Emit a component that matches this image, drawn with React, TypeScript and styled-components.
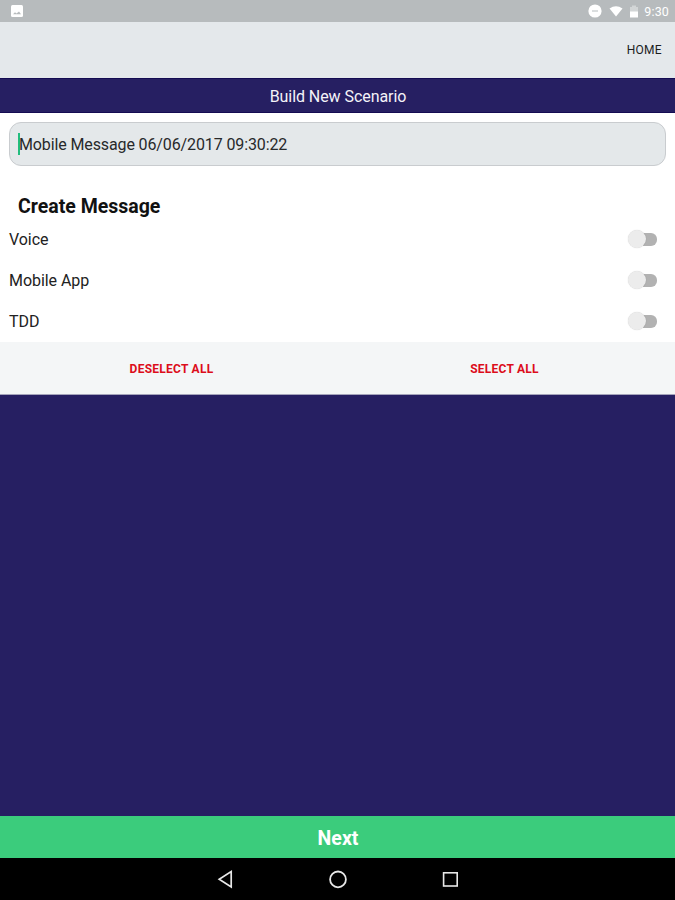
import React from "react";
import styled, { createGlobalStyle } from "styled-components";

const GlobalStyle = createGlobalStyle`
  * { box-sizing: border-box; }
  body { margin: 0; font-family: Roboto, "Liberation Sans", sans-serif; }
  button { font-family: inherit; border: 0; padding: 0; background: none; }
`;

const Screen = styled.div`
  width: 675px;
  height: 900px;
  display: flex;
  flex-direction: column;
  background: #261f62;
  overflow: hidden;
`;

const StatusBar = styled.div`
  height: 22px;
  flex: none;
  display: flex;
  align-items: center;
  justify-content: space-between;
  padding: 0 6px 0 11px;
  background: #b7bbbd;
  color: #fff;
  svg { display: block; }
`;

const StatusIcons = styled.div`
  display: flex;
  align-items: center;
`;

const Gap = styled.span<{ $w: number }>`
  width: ${(p) => p.$w}px;
`;

const Clock = styled.span`
  margin-left: 5px;
  padding-top: 1px;
  font-size: 12.5px;
  line-height: 22px;
  font-weight: 400;
  letter-spacing: 0.15px;
  color: #fff;
`;

const AppBar = styled.header`
  height: 56px;
  flex: none;
  display: flex;
  align-items: center;
  justify-content: flex-end;
  padding-right: 13px;
  background: #e4e8eb;
`;

const HomeButton = styled.button`
  font-size: 12px;
  line-height: 16px;
  letter-spacing: 0.3px;
  color: #1c1d1e;
`;

const TitleBar = styled.h1`
  height: 35px;
  flex: none;
  margin: 0;
  padding: 1px 0 0 1px;
  background: #261f62;
  box-shadow: inset 0 1px #140b52, inset 0 -1px #140b52;
  color: #f4f3f8;
  font-size: 16px;
  font-weight: 400;
  line-height: 36px;
  letter-spacing: -0.06px;
  text-align: center;
`;

const Form = styled.main`
  height: 229px;
  flex: none;
  padding: 9px 9px 0;
  background: #fff;
`;

const NameField = styled.div`
  height: 44px;
  display: flex;
  align-items: center;
  padding-left: 8px;
  border: 1px solid #c9cccf;
  border-radius: 12px;
  background: #e4e8ea;
  color: #27292a;
  font-size: 16px;
  line-height: 20px;
`;

const Caret = styled.span`
  width: 2px;
  height: 22px;
  margin-right: -1px;
  background: #22bd7e;
`;

const FieldText = styled.span`
  padding-top: 2px;
  letter-spacing: -0.12px;
`;

const SectionTitle = styled.h2`
  height: 53px;
  margin: 0;
  padding: 30px 0 0 9px;
  font-size: 19.5px;
  line-height: 22px;
  font-weight: 700;
  color: #111;
`;

const Row = styled.div`
  height: 41px;
  display: flex;
  align-items: center;
  justify-content: space-between;
  padding-right: 8px;
  font-size: 16px;
  line-height: 20px;
  letter-spacing: -0.06px;
  color: #222;
`;

const Switch = styled.button`
  width: 30px;
  height: 18px;
  margin-bottom: 1px;
  display: flex;
  align-items: center;
`;

const Thumb = styled.span`
  flex: none;
  width: 18px;
  height: 18px;
  border-radius: 50%;
  background: #ececec;
  box-shadow: 0 0 1px rgba(0, 0, 0, 0.22);
  z-index: 1;
`;

const Track = styled.span`
  flex: none;
  width: 20px;
  height: 13px;
  margin-left: -9px;
  border-radius: 6px;
  background: #b2b2b2;
`;

const Actions = styled.div`
  height: 53px;
  flex: none;
  display: grid;
  grid-template-columns: 343px 323px;
  background: #f4f6f7;
  border-bottom: 1px solid #a5a4bb;
`;

const ActionButton = styled.button`
  padding-top: 2px;
  color: #dc0d1b;
  font-size: 12px;
  font-weight: 700;
  line-height: 16px;
  letter-spacing: 0.25px;
`;

const Body = styled.div`
  flex: 1;
`;

const NextButton = styled.button`
  height: 42px;
  flex: none;
  padding-top: 3px;
  padding-left: 1px;
  background: #3bcc7c;
  color: #fff;
  font-size: 19.5px;
  font-weight: 700;
  line-height: 39px;
`;

const NavBar = styled.nav`
  height: 42px;
  flex: none;
  display: flex;
  justify-content: center;
  gap: 92px;
  align-items: center;
  background: #000;
  svg { display: block; }
`;

const PictureIcon = () => (
  <svg width="12" height="12" viewBox="0 0 12 12">
    <rect width="12" height="12" rx="1.5" fill="#fff" />
    <path d="M2 9.2 4 7.2l1.5 1.2L8 6.5l2 2.7Z" fill="#b7bbbd" />
  </svg>
);

const DndIcon = () => (
  <svg width="14" height="14" viewBox="0 0 14 14">
    <circle cx="7" cy="7" r="6.6" fill="#fff" />
    <path d="M4 7h6" stroke="#d3d6d8" strokeWidth="1.6" />
  </svg>
);

const WifiIcon = () => (
  <svg width="14" height="12" viewBox="0 0 14 12">
    <path d="M.5 3.5Q7-.9 13.5 3.5L7 11.5Z" fill="#fff" />
  </svg>
);

const BatteryIcon = () => (
  <svg width="10" height="14" viewBox="0 0 10 14">
    <path d="M1 3h2V1.5h4V3h2v5H1Z" fill="#d2d5d6" />
    <path d="M1 7.5h8v6H1Z" fill="#fff" />
  </svg>
);

const options = ["Voice", "Mobile App", "TDD"];

export default function App() {
  return (
    <>
      <GlobalStyle />
      <Screen>
        <StatusBar>
          <PictureIcon />
          <StatusIcons>
            <DndIcon />
            <Gap $w={7} />
            <WifiIcon />
            <Gap $w={6} />
            <BatteryIcon />
            <Clock>9:30</Clock>
          </StatusIcons>
        </StatusBar>
        <AppBar>
          <HomeButton>HOME</HomeButton>
        </AppBar>
        <TitleBar>Build New Scenario</TitleBar>
        <Form>
          <NameField>
            <Caret />
            <FieldText>Mobile Message 06/06/2017 09:30:22</FieldText>
          </NameField>
          <SectionTitle>Create Message</SectionTitle>
          {options.map((name) => (
            <Row key={name}>
              {name}
              <Switch role="switch" aria-checked={false} aria-label={name}>
                <Thumb />
                <Track />
              </Switch>
            </Row>
          ))}
        </Form>
        <Actions>
          <ActionButton>DESELECT ALL</ActionButton>
          <ActionButton>SELECT ALL</ActionButton>
        </Actions>
        <Body />
        <NextButton>Next</NextButton>
        <NavBar>
          <svg width="20" height="20" viewBox="0 0 20 20" fill="none" stroke="#e8e8e8" strokeWidth="1.7">
            <path d="M15.2 2.5v15.4L3.2 10.2Z" />
          </svg>
          <svg width="20" height="20" viewBox="0 0 20 20" fill="none" stroke="#e8e8e8" strokeWidth="1.8">
            <circle cx="10" cy="10.4" r="7.9" />
          </svg>
          <svg width="20" height="20" viewBox="0 0 20 20" fill="none" stroke="#e8e8e8" strokeWidth="1.6">
            <rect x="3.6" y="3.8" width="13.6" height="13.2" />
          </svg>
        </NavBar>
      </Screen>
    </>
  );
}
